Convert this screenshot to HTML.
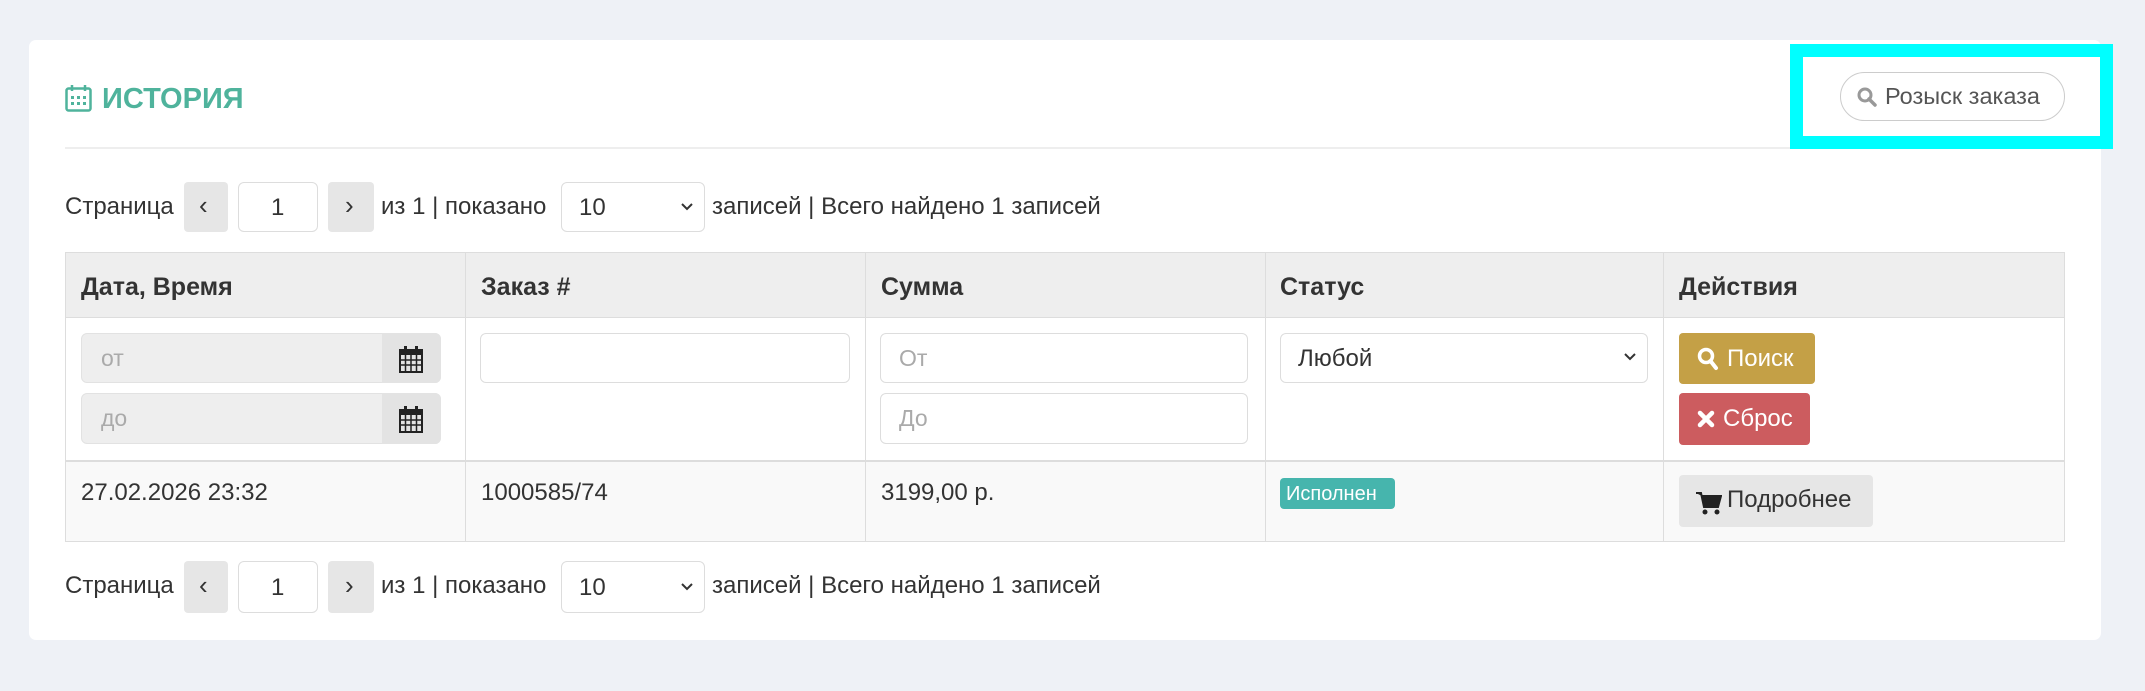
<!DOCTYPE html>
<html><head><meta charset="utf-8"><style>
*{box-sizing:border-box;margin:0;padding:0}
body{width:2145px;height:691px;background:#eef1f6;font-family:"Liberation Sans",sans-serif;color:#333;font-size:24px;position:relative;overflow:hidden}
.a{position:absolute}
.card{left:29px;top:40px;width:2072px;height:600px;background:#fff;border-radius:7px}
.inp{border:1px solid #ddd;border-radius:6px;background:#fff}
.gb{background:#e6e6e6;border-radius:4px}
.t{white-space:nowrap;line-height:1}
.h{font-weight:bold;font-size:25px;top:275px}
</style></head><body>
<div class="a card"></div>
<svg class="a" style="left:65px;top:84px" width="27" height="28" viewBox="0 0 27 28"><rect x="1.5" y="4.5" width="24" height="22" rx="2" fill="none" stroke="#4fb39c" stroke-width="2.5"/><line x1="7" y1="1" x2="7" y2="7" stroke="#4fb39c" stroke-width="2.5"/><line x1="20" y1="1" x2="20" y2="7" stroke="#4fb39c" stroke-width="2.5"/><g fill="#4fb39c"><rect x="6" y="12" width="3" height="3"/><rect x="12" y="12" width="3" height="3"/><rect x="18" y="12" width="3" height="3"/><rect x="6" y="18" width="3" height="3"/><rect x="12" y="18" width="3" height="3"/><rect x="18" y="18" width="3" height="3"/></g></svg>
<div class="a t" style="left:102px;top:85px;font-size:29px;font-weight:bold;color:#4fb39c">ИСТОРИЯ</div>
<div class="a" style="left:65px;top:147px;width:2000px;height:2px;background:#eee"></div>
<div class="a" style="left:1790px;top:44px;width:323px;height:105px;border:13px solid #00ffff"></div>
<div class="a" style="left:1840px;top:72px;width:225px;height:49px;border:1px solid #ccc;border-radius:25px"></div>
<svg class="a" style="left:1857px;top:87px" width="20" height="20" viewBox="0 0 20 20"><circle cx="8" cy="8" r="6" fill="none" stroke="#999" stroke-width="3"/><line x1="12" y1="12" x2="18" y2="18" stroke="#999" stroke-width="3.5" stroke-linecap="round"/></svg>
<div class="a t" style="left:1885px;top:85px;font-size:23.5px;color:#555">Розыск заказа</div>

<!-- pagination top -->
<div class="a t" style="left:65px;top:195px">Страница</div>
<div class="a gb" style="left:184px;top:182px;width:44px;height:50px"></div><div class="a t" style="left:199px;top:192px;font-size:26px">‹</div>
<div class="a inp" style="left:238px;top:182px;width:80px;height:50px"></div><div class="a t" style="left:271px;top:196px">1</div>
<div class="a gb" style="left:328px;top:182px;width:46px;height:50px"></div><div class="a t" style="left:345px;top:192px;font-size:26px">›</div>
<div class="a t" style="left:381px;top:195px">из 1 | показано</div>
<div class="a inp" style="left:561px;top:182px;width:144px;height:50px"></div><div class="a t" style="left:579px;top:196px">10</div>
<svg class="a" style="left:680px;top:202px" width="14" height="10"><path d="M2 2 L7 7 L12 2" fill="none" stroke="#333" stroke-width="2"/></svg>
<div class="a t" style="left:712px;top:195px">записей | Всего найдено 1 записей</div>

<!-- table -->
<div class="a" style="left:65px;top:252px;width:2000px;height:290px;border:1px solid #ddd"></div>
<div class="a" style="left:66px;top:253px;width:1998px;height:65px;background:#eee"></div>
<div class="a" style="left:66px;top:460px;width:1998px;height:81px;background:#f9f9f9"></div>
<div class="a" style="left:66px;top:317px;width:1998px;height:1px;background:#ddd"></div>
<div class="a" style="left:66px;top:460px;width:1998px;height:2px;background:#ddd"></div>
<div class="a" style="left:465px;top:253px;width:1px;height:288px;background:#ddd"></div>
<div class="a" style="left:865px;top:253px;width:1px;height:288px;background:#ddd"></div>
<div class="a" style="left:1265px;top:253px;width:1px;height:288px;background:#ddd"></div>
<div class="a" style="left:1663px;top:253px;width:1px;height:288px;background:#ddd"></div>
<div class="a t h" style="left:81px">Дата, Время</div>
<div class="a t h" style="left:481px">Заказ #</div>
<div class="a t h" style="left:881px">Сумма</div>
<div class="a t h" style="left:1280px">Статус</div>
<div class="a t h" style="left:1679px">Действия</div>

<!-- filters -->
<div class="a" style="left:81px;top:333px;width:360px;height:50px;background:#eee;border:1px solid #e2e2e2;border-radius:6px"></div>
<div class="a" style="left:382px;top:333px;width:59px;height:50px;background:#e3e3e3;border-radius:0 6px 6px 0"></div>
<div class="a t" style="left:101px;top:347px;color:#aaa;font-size:23px">от</div>
<div class="a" style="left:81px;top:393px;width:360px;height:51px;background:#eee;border:1px solid #e2e2e2;border-radius:6px"></div>
<div class="a" style="left:382px;top:393px;width:59px;height:51px;background:#e3e3e3;border-radius:0 6px 6px 0"></div>
<div class="a t" style="left:101px;top:407px;color:#aaa;font-size:23px">до</div>
<svg class="a" style="left:399px;top:345px" width="24" height="28" viewBox="0 0 24 28"><rect x="1" y="5" width="22" height="22" fill="none" stroke="#222" stroke-width="2"/><rect x="1" y="5" width="22" height="5" fill="#222"/><path d="M1 15H23M1 20H23M6.5 10V27M12 10V27M17.5 10V27" stroke="#222" stroke-width="1.5"/><rect x="5" y="1" width="3" height="6" fill="#222"/><rect x="16" y="1" width="3" height="6" fill="#222"/></svg>
<svg class="a" style="left:399px;top:405px" width="24" height="28" viewBox="0 0 24 28"><rect x="1" y="5" width="22" height="22" fill="none" stroke="#222" stroke-width="2"/><rect x="1" y="5" width="22" height="5" fill="#222"/><path d="M1 15H23M1 20H23M6.5 10V27M12 10V27M17.5 10V27" stroke="#222" stroke-width="1.5"/><rect x="5" y="1" width="3" height="6" fill="#222"/><rect x="16" y="1" width="3" height="6" fill="#222"/></svg>
<div class="a inp" style="left:480px;top:333px;width:370px;height:50px"></div>
<div class="a inp" style="left:880px;top:333px;width:368px;height:50px"></div>
<div class="a t" style="left:899px;top:347px;color:#aaa;font-size:23px">От</div>
<div class="a inp" style="left:880px;top:393px;width:368px;height:51px"></div>
<div class="a t" style="left:899px;top:407px;color:#aaa;font-size:23px">До</div>
<div class="a inp" style="left:1280px;top:333px;width:368px;height:50px"></div>
<div class="a t" style="left:1298px;top:347px">Любой</div>
<svg class="a" style="left:1623px;top:352px" width="14" height="10"><path d="M2 2 L7 7 L12 2" fill="none" stroke="#333" stroke-width="2"/></svg>
<div class="a" style="left:1679px;top:333px;width:136px;height:51px;background:#c4a046;border-radius:4px"></div>
<svg class="a" style="left:1697px;top:347px" width="22" height="24" viewBox="0 0 22 24"><circle cx="9" cy="9" r="6.5" fill="none" stroke="#fff" stroke-width="3.5"/><line x1="13.5" y1="14" x2="19" y2="21" stroke="#fff" stroke-width="4" stroke-linecap="round"/></svg>
<div class="a t" style="left:1727px;top:347px;color:#fff">Поиск</div>
<div class="a" style="left:1679px;top:393px;width:131px;height:52px;background:#cc5c5f;border-radius:4px"></div>
<svg class="a" style="left:1697px;top:410px" width="18" height="18" viewBox="0 0 18 18"><path d="M3 3L15 15M15 3L3 15" stroke="#fff" stroke-width="4.5" stroke-linecap="round"/></svg>
<div class="a t" style="left:1723px;top:407px;color:#fff">Сброс</div>

<!-- data row -->
<div class="a t" style="left:81px;top:481px">27.02.2026 23:32</div>
<div class="a t" style="left:481px;top:481px">1000585/74</div>
<div class="a t" style="left:881px;top:481px">3199,00 р.</div>
<div class="a" style="left:1280px;top:478px;width:115px;height:31px;background:#46b5ad;border-radius:4px"></div>
<div class="a t" style="left:1286px;top:484px;color:#fff;font-size:20px">Исполнен</div>
<div class="a gb" style="left:1679px;top:475px;width:194px;height:52px"></div>
<svg class="a" style="left:1696px;top:491px" width="26" height="24" viewBox="0 0 26 24"><path d="M0 2H5L8 16H22L25 5H6" fill="#222" stroke="#222" stroke-width="2"/><circle cx="9" cy="21" r="2.5" fill="#222"/><circle cx="21" cy="21" r="2.5" fill="#222"/></svg>
<div class="a t" style="left:1727px;top:488px">Подробнее</div>

<!-- pagination bottom -->
<div class="a t" style="left:65px;top:574px">Страница</div>
<div class="a gb" style="left:184px;top:561px;width:44px;height:52px"></div><div class="a t" style="left:199px;top:572px;font-size:26px">‹</div>
<div class="a inp" style="left:238px;top:561px;width:80px;height:52px"></div><div class="a t" style="left:271px;top:576px">1</div>
<div class="a gb" style="left:328px;top:561px;width:46px;height:52px"></div><div class="a t" style="left:345px;top:572px;font-size:26px">›</div>
<div class="a t" style="left:381px;top:574px">из 1 | показано</div>
<div class="a inp" style="left:561px;top:561px;width:144px;height:52px"></div><div class="a t" style="left:579px;top:576px">10</div>
<svg class="a" style="left:680px;top:582px" width="14" height="10"><path d="M2 2 L7 7 L12 2" fill="none" stroke="#333" stroke-width="2"/></svg>
<div class="a t" style="left:712px;top:574px">записей | Всего найдено 1 записей</div>
</body></html>
